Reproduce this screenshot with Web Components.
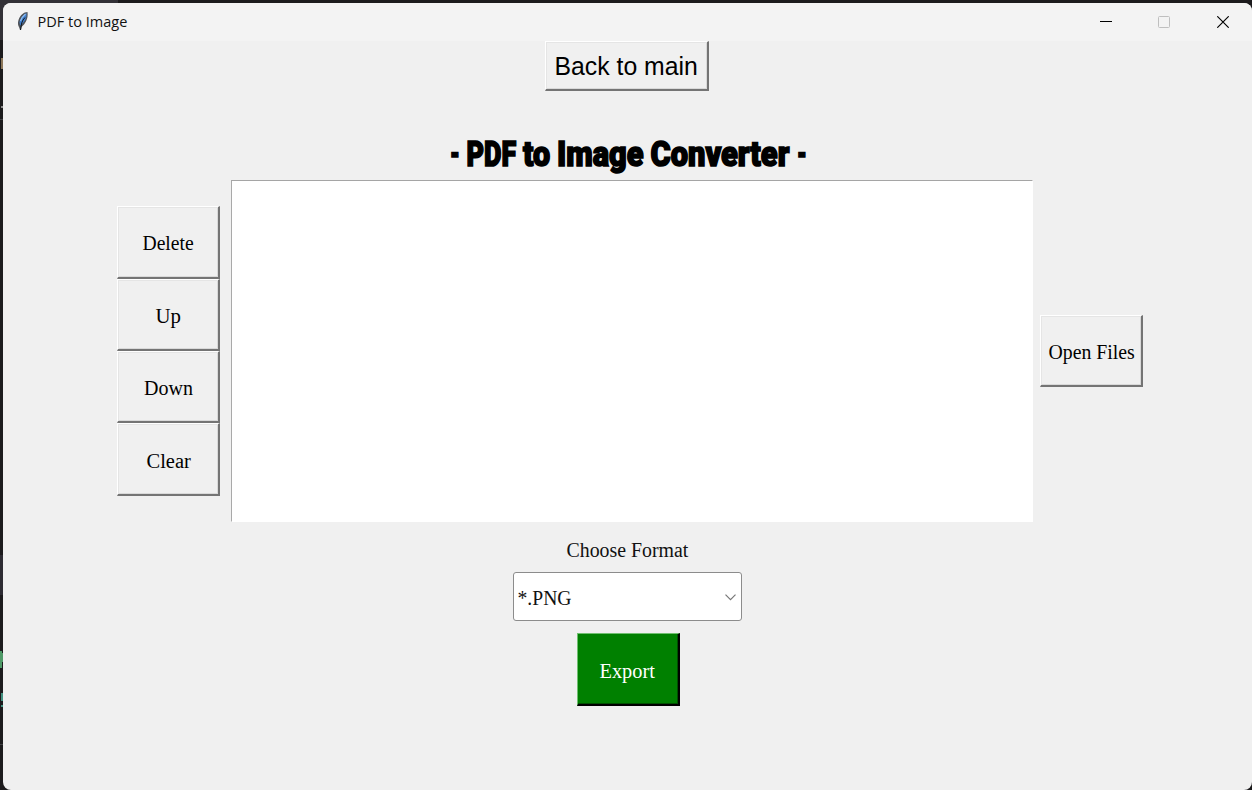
<!DOCTYPE html>
<html lang="en">
<head>
<meta charset="utf-8">
<title>PDF to Image</title>
<style>
html,body{margin:0;height:100%;overflow:hidden;background:#1c1b1d}
</style>
</head>
<body>
<converter-app></converter-app>
<script>
const define = (name, html, setup) => {
  const template = document.createElement('template');
  template.innerHTML = html;
  customElements.define(name, class extends HTMLElement {
    constructor() {
      super();
      this.attachShadow({mode: 'open'}).append(template.content.cloneNode(true));
    }
    connectedCallback() { if (setup) setup(this); }
  });
};

// A line of text squeezed or stretched to the width attribute.
define('fit-text', `
<style>
:host{display:inline-flex;justify-content:center;white-space:pre}
span{display:inline-block;flex:none;transform-origin:50% 50%}
</style><span><slot></slot></span>`, el => {
  const want = +el.getAttribute('width');
  const span = el.shadowRoot.querySelector('span');
  el.style.width = want + 'px';
  span.style.transform = 'scaleX(' + want / span.offsetWidth + ')';
});

define('tk-button', `
<style>
:host{display:flex;box-sizing:border-box;width:103px;height:72.4px;align-items:center;justify-content:center;
 color:#000;background:#f0f0f0;border:solid;border-width:1px 2px 2px 1px;border-color:#fff #747474 #747474 #fff;
 box-shadow:inset 1px 1px #e5e5e5,inset -1px -1px #d9d9d9;font:20px "Liberation Serif",serif;padding:4px 0 0 2px}
:host([large]){width:164px;height:50px;font:26px "Liberation Sans",sans-serif;padding:2px 0 0}
:host([primary]){color:#fff;background:#008000;border-color:#70c070 #000 #000 #70c070;height:73px;padding-left:0;
 box-shadow:inset -1px -1px #005000}
</style><slot></slot>`);

define('title-bar', `
<style>
:host{display:flex;height:38px;background:#f3f3f3;align-items:center;font:15px "Open Sans","Noto Sans",sans-serif;color:#111}
.feather{width:12px;height:20px;margin:-2px 8px 0 14px}
.name{flex:1;margin-top:-2px}
.controls{display:flex;align-items:center;gap:46px;padding-right:23px}
.controls svg{width:12px;height:12px}
.controls svg:nth-child(-n+2){margin-left:-1px;margin-right:1px}
svg{display:block;fill:none}
</style>
<svg class="feather" viewBox="0 0 12 20"><path d="M10.500 1C7 1 3 4 1.500 9c-.9 3-.7 5 .7 7.500L3 19h1l.5-3C8 13 11.500 8 10.500 1Z" fill="#50545a"/><path d="M9.500 2C6 4 3.500 7 2.500 11l.7 3.500C6.500 12 10 8 9.500 2Z" fill="#3f7fd0"/><path d="M8.500 3C6 5 4.500 7 3.500 10" stroke="#8fbdf0" stroke-width="1.300"/><path d="M8 6.500 6 9l-1.300 3-1.200 7" stroke="#101820"/></svg>
<span class="name"><fit-text width="90">PDF to Image</fit-text></span>
<div class="controls">
<svg viewBox="0 0 12 12"><path d="M0 5.500h12" stroke="#000"/></svg>
<svg viewBox="0 0 12 12"><rect x=".5" y=".5" width="11" height="11" rx="1" stroke="#bfbfbf"/></svg>
<svg viewBox="0 0 12 12"><path d="m.3.300 11.400 11.400M11.700.300.300 11.700" stroke="#000" stroke-width="1.150"/></svg>
</div>`);

define('file-list', `
<style>
:host{display:block;box-sizing:border-box;width:802px;height:342px;background:#fff;border:1px solid;
border-color:#a5a5a5 #fff #fff #a9a9a9}
</style>`);

define('format-select', `
<style>
:host{display:flex;box-sizing:border-box;width:229px;height:49px;align-items:center;justify-content:space-between;background:#fff;
border:1px solid #8c8c8c;border-radius:3px;padding:3px 5px 0 3px;font:20px "Liberation Serif",serif;color:#111}
svg{width:11px;height:7px;fill:none;margin-top:-2px}
</style><slot></slot><svg viewBox="0 0 11 7"><path d="m.5.700 5 5 5-5" stroke="#777" stroke-width="1.200"/></svg>`);

// The strip of the editor that stays visible left of the window.
define('editor-edge', `
<style>
:host{display:block;position:absolute;left:0;top:0;width:1252px;height:790px;overflow:hidden;background:#1c1b1d}
i{position:absolute;left:0;width:3px;height:1px;background:#414145}
.tab{top:0;width:118px;height:40px;background:#323137}
.block{top:555px;height:40px;background:#2d2c33}
.a{top:119px}.b{top:744px}
.c{top:58px;height:11px;background:#8b7659;width:2px;left:1px}
.d{top:106px;background:#888;height:2px;width:2px;left:1px}
.p{top:651px;height:17px;background:#4f9a68;width:2px}
.q{top:653px;height:9px;left:2px;width:1px;background:#4f9a68}
.g{top:693px;height:8px;width:2px;left:1px;background:#429181}
.h{top:705px;height:2px;width:2px;left:1px;background:#429181}
</style><i class="tab"></i><i class="block"></i><i class="a"></i><i class="b"></i><i class="c"></i><i class="d"></i><i class="p"></i><i class="q"></i><i class="g"></i><i class="h"></i>`);

define('app-window', `
<style>
:host{display:block;position:relative;box-sizing:border-box;margin:3px 0 0 3px;width:1249px;height:787px;background:#f0f0f0;
border-radius:8px;overflow:hidden}
</style><slot></slot>`);

define('converter-app', `
<style>
:host{display:flow-root;height:790px;overflow:hidden;position:relative}
.content{display:flex;flex-direction:column;align-items:center}
.back{margin-left:-1px}
h1{display:flex;align-items:baseline;justify-content:space-between;width:357px;margin:38px 0 0 1px;height:51px;
font:900 35px/51px Roboto,sans-serif;-webkit-text-stroke:1.600px #000;color:#000;white-space:pre}
.row{display:flex;align-items:center;margin-left:4px}
.side{display:flex;flex-direction:column;margin:0 11px 0 0}
.open{margin-left:7px}
.label{font:20px/22px "Liberation Serif",serif;color:#111;margin:17px 0 11px}
.export{margin:12px 0 0 1px}
</style>
<editor-edge></editor-edge>
<app-window>
<title-bar></title-bar>
<div class="content">
<tk-button large class="back"><fit-text width="143">Back to main</fit-text></tk-button>
<h1><fit-text width="10">-</fit-text> <fit-text width="50">PDF</fit-text> <fit-text width="27">to</fit-text> <fit-text width="87">Image</fit-text> <fit-text width="139">Converter</fit-text> <fit-text width="10">-</fit-text></h1>
<div class="row">
<div class="side">
<tk-button><fit-text width="51">Delete</fit-text></tk-button>
<tk-button><fit-text width="25">Up</fit-text></tk-button>
<tk-button><fit-text width="49">Down</fit-text></tk-button>
<tk-button><fit-text width="44">Clear</fit-text></tk-button>
</div>
<file-list></file-list>
<tk-button class="open"><fit-text width="86">Open Files</fit-text></tk-button>
</div>
<div class="label"><fit-text width="122">Choose Format</fit-text></div>
<format-select><fit-text width="54">*.PNG</fit-text></format-select>
<tk-button primary class="export"><fit-text width="55">Export</fit-text></tk-button>
</div>
</app-window>`);
</script>
</body>
</html>
